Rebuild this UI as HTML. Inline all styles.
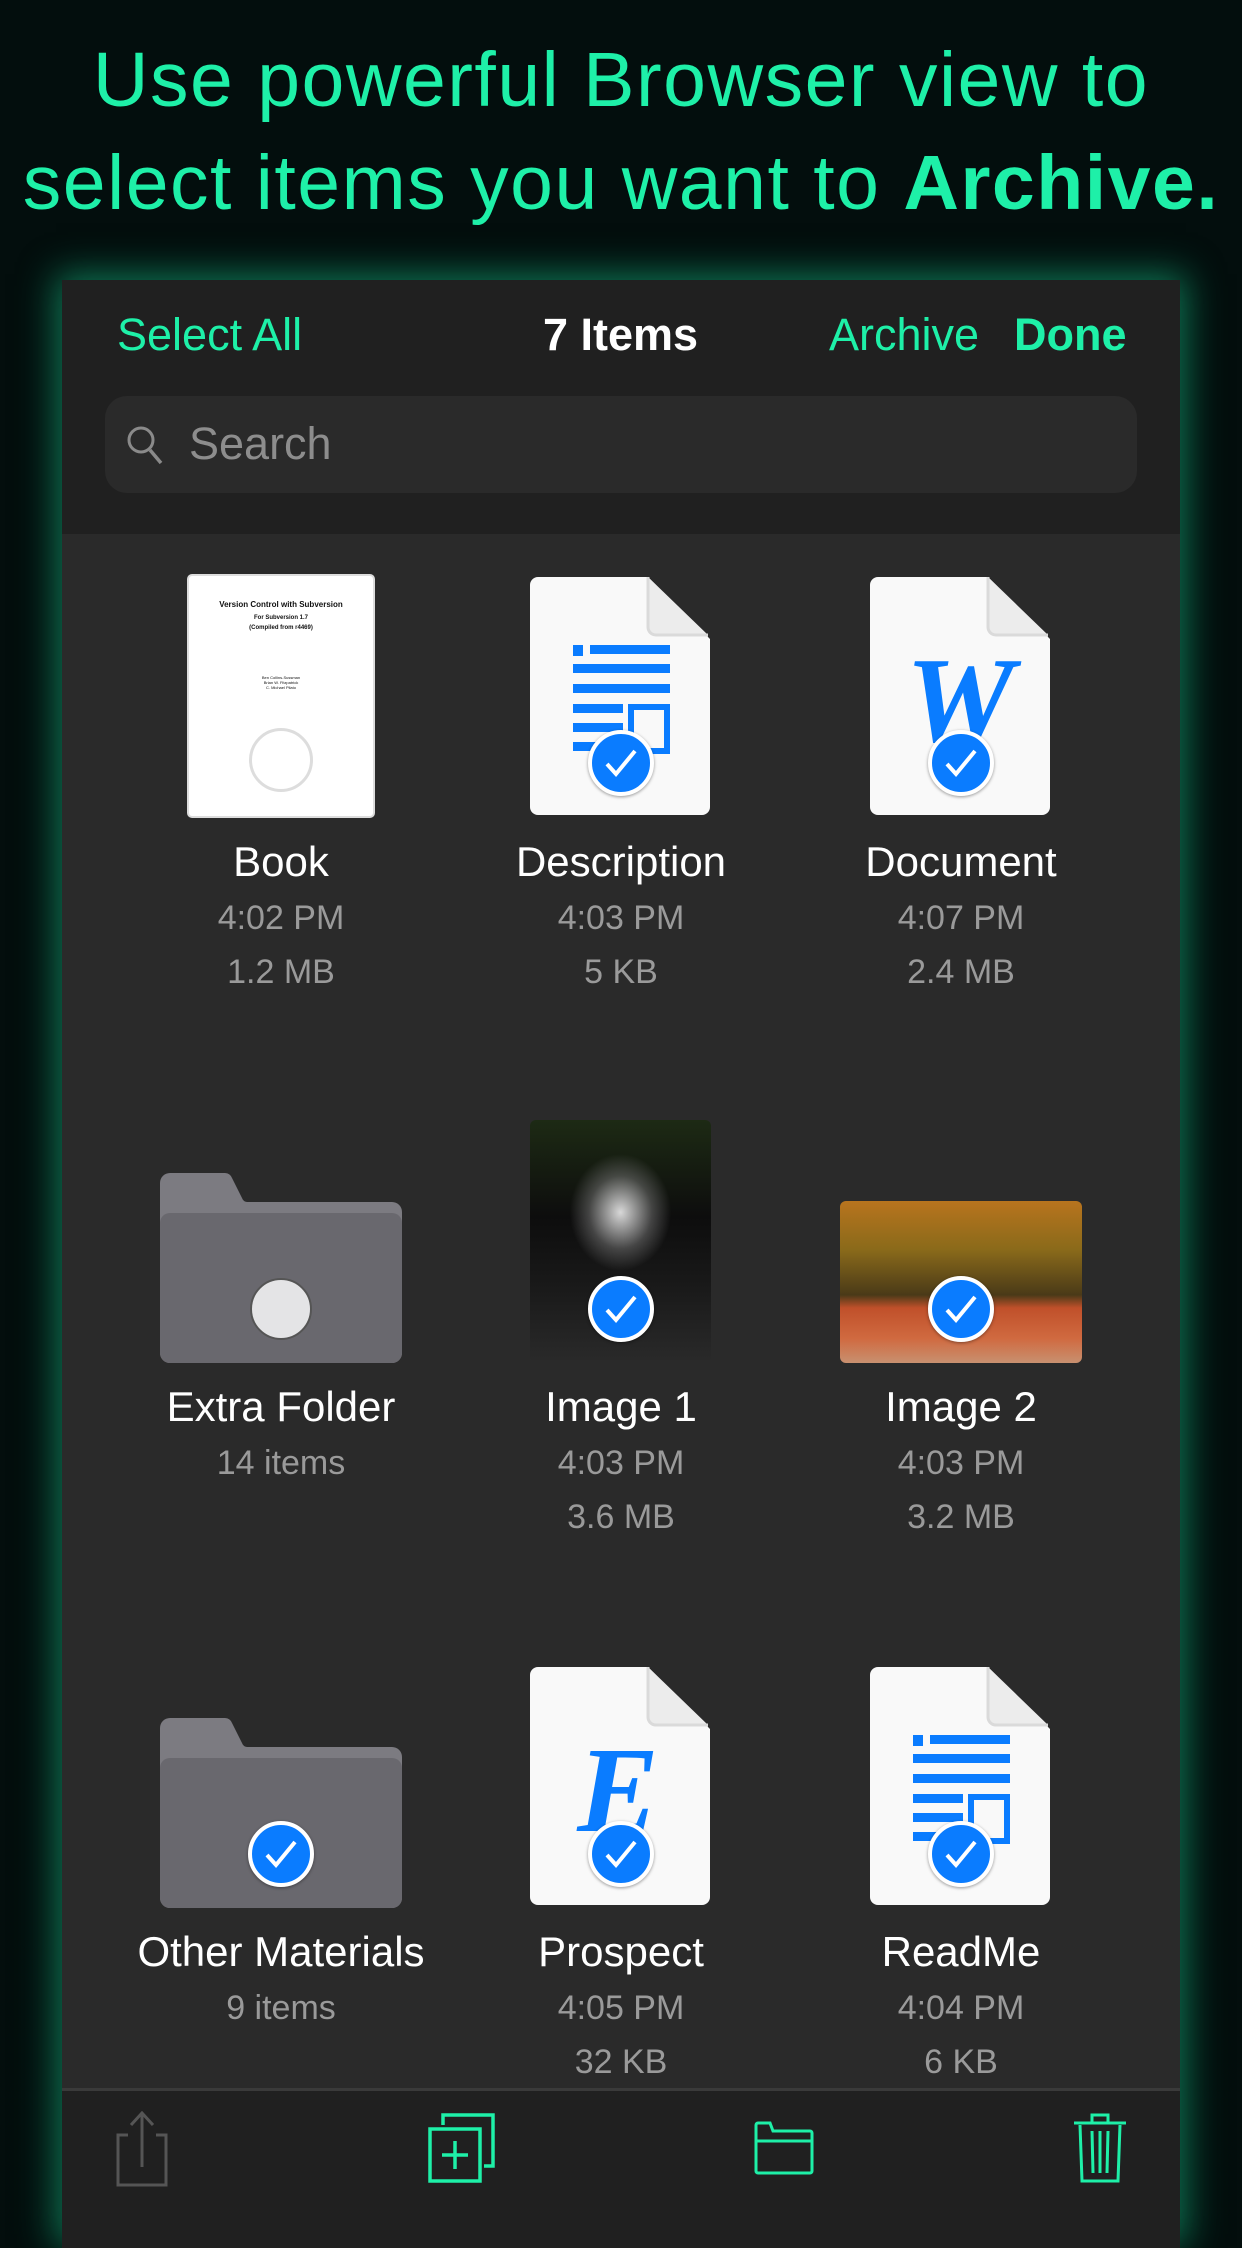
<!DOCTYPE html>
<html><head><meta charset="utf-8"><style>
*{margin:0;padding:0;box-sizing:border-box}
body{width:1242px;height:2208px;background:#030e0d;position:relative;overflow:hidden;font-family:"Liberation Sans",sans-serif}
.t{position:absolute;left:0;width:1242px;text-align:center;color:#1ef0a8;font-size:77px;letter-spacing:1.5px;white-space:nowrap;line-height:88px}
.panel{position:absolute;left:62px;top:280px;width:1118px;height:1960px;background:#2a2a2a;box-shadow:0 0 34px 6px rgba(22,200,140,.55)}
.hdr{position:absolute;left:0;top:0;width:1118px;height:254px;background:#202020}
.a{position:absolute;font-size:45px;white-space:nowrap}
.g{color:#1ef0a8}
.search{position:absolute;left:43px;top:116px;width:1032px;height:97px;background:#2a2a2a;border-radius:22px}
.lbl{position:absolute;width:340px;text-align:center;white-space:nowrap}
.n{color:#fff;font-size:42px;margin-top:-2px}
.s{color:#9a9a9a;font-size:34px;margin-top:-2px}
.ic{position:absolute}
.chk{position:absolute;width:66px;height:66px;border-radius:50%;background:#0a7cff;border:4px solid #fff;box-shadow:0 1px 3px rgba(0,0,0,.4)}
.chk svg{position:absolute;left:12px;top:14px}
.tb{position:absolute;left:0;top:1808px;width:1118px;height:160px;background:#202020;border-top:3px solid #3a3a3a}
</style></head><body>
<div class="t" style="top:36px">Use powerful Browser view to</div>
<div class="t" style="top:139px">select items you want to <b>Archive.</b></div>
<div class="panel">
<div class="hdr">
<div class="a g" style="left:55px;top:29px">Select All</div>
<div class="a" style="left:481px;top:29px;color:#fff;font-weight:bold">7 Items</div>
<div class="a g" style="left:767px;top:29px">Archive</div>
<div class="a g" style="left:952px;top:29px;font-weight:bold">Done</div>
<div class="search">
<svg style="position:absolute;left:20px;top:28px" width="40" height="42" viewBox="0 0 40 42"><circle cx="16" cy="16" r="12" fill="none" stroke="#8a8a8a" stroke-width="3"/><line x1="25" y1="26" x2="36" y2="39" stroke="#8a8a8a" stroke-width="3.5"/></svg>
<div style="position:absolute;left:84px;top:22px;color:#8d8d8d;font-size:45px">Search</div>
</div>
</div>

<!-- Row 1 -->
<div class="ic" style="left:125px;top:294px;width:188px;height:244px;background:#fff;border-radius:5px;border:2px solid #ddd">
<div style="text-align:center;font-size:8px;font-weight:bold;margin-top:24px;color:#111">Version Control with Subversion</div>
<div style="text-align:center;font-size:6px;font-weight:bold;margin-top:6px;color:#111">For Subversion 1.7</div>
<div style="text-align:center;font-size:6px;font-weight:bold;margin-top:4px;color:#111">(Compiled from r4469)</div>
<div style="text-align:center;font-size:4px;margin-top:44px;color:#111;line-height:5px">Ben Collins-Sussman<br>Brian W. Fitzpatrick<br>C. Michael Pilato</div>
<div style="position:absolute;left:60px;top:152px;width:64px;height:64px;border-radius:50%;border:3px solid #ddd"></div>
</div>

<svg class="ic" style="left:468px;top:297px" width="180" height="238" viewBox="0 0 180 238"><path d="M8 0H118L180 62V230a8 8 0 0 1-8 8H8a8 8 0 0 1-8-8V8a8 8 0 0 1 8-8z" fill="#f9f9f9"/><path d="M118 0V50a8 8 0 0 0 8 8H178" fill="#ececec" stroke="#dadada" stroke-width="3"/>
<g fill="#0a7cff"><rect x="43" y="68" width="10" height="11"/><rect x="60" y="68" width="80" height="9"/><rect x="43" y="87" width="97" height="9"/><rect x="43" y="107" width="97" height="9"/><rect x="43" y="127" width="50" height="9"/><rect x="43" y="146" width="50" height="9"/><rect x="43" y="165" width="50" height="9"/><path d="M98 127h42v50h-42zM104 133v38h30v-38z"/></g></svg>

<svg class="ic" style="left:808px;top:297px" width="180" height="238" viewBox="0 0 180 238"><path d="M8 0H118L180 62V230a8 8 0 0 1-8 8H8a8 8 0 0 1-8-8V8a8 8 0 0 1 8-8z" fill="#f9f9f9"/><path d="M118 0V50a8 8 0 0 0 8 8H178" fill="#ececec" stroke="#dadada" stroke-width="3"/>
<text x="90" y="164" text-anchor="middle" font-family="Liberation Serif,serif" font-weight="bold" font-style="italic" font-size="122" fill="#0a7cff">W</text></svg>

<div class="chk" style="left:526px;top:450px"><svg width="34" height="30" viewBox="0 0 34 30"><path d="M3 16L12 26L31 3" fill="none" stroke="#fff" stroke-width="4"/></svg></div>
<div class="chk" style="left:866px;top:450px"><svg width="34" height="30" viewBox="0 0 34 30"><path d="M3 16L12 26L31 3" fill="none" stroke="#fff" stroke-width="4"/></svg></div>

<div class="lbl n" style="left:49px;top:560px">Book</div>
<div class="lbl s" style="left:49px;top:621px">4:02 PM</div>
<div class="lbl s" style="left:49px;top:675px">1.2 MB</div>
<div class="lbl n" style="left:389px;top:560px">Description</div>
<div class="lbl s" style="left:389px;top:621px">4:03 PM</div>
<div class="lbl s" style="left:389px;top:675px">5 KB</div>
<div class="lbl n" style="left:729px;top:560px">Document</div>
<div class="lbl s" style="left:729px;top:621px">4:07 PM</div>
<div class="lbl s" style="left:729px;top:675px">2.4 MB</div>

<!-- Row 2 -->
<svg class="ic" style="left:98px;top:893px" width="242" height="190" viewBox="0 0 242 190"><path d="M10 0H65a8 8 0 0 1 7 5L82 25a6 6 0 0 0 5 4H232a10 10 0 0 1 10 10V180a10 10 0 0 1-10 10H10A10 10 0 0 1 0 180V10A10 10 0 0 1 10 0z" fill="#7c7b81"/><path d="M10 40H232a10 10 0 0 1 10 10V180a10 10 0 0 1-10 10H10A10 10 0 0 1 0 180V50a10 10 0 0 1 10-10z" fill="#69686e"/></svg>
<div style="position:absolute;left:188px;top:998px;width:62px;height:62px;border-radius:50%;background:#e4e4e6;border:2px solid #555"></div>

<div class="ic" style="left:468px;top:840px;width:181px;height:243px;border-radius:6px;background:radial-gradient(ellipse 35% 30% at 50% 38%,#d8d8d8,rgba(120,120,120,.5) 50%,transparent 80%),linear-gradient(180deg,#1d2a14 0%,#0d0d0d 40%,#1a1a1a 70%,#2a2a2a 100%)"></div>
<div class="ic" style="left:778px;top:921px;width:242px;height:162px;border-radius:6px;background:linear-gradient(180deg,#b8741e 0%,#8a6a1a 30%,#4a3a18 58%,#c0502a 66%,#d06a40 85%,#c89070 100%)"></div>
<div class="chk" style="left:526px;top:996px"><svg width="34" height="30" viewBox="0 0 34 30"><path d="M3 16L12 26L31 3" fill="none" stroke="#fff" stroke-width="4"/></svg></div>
<div class="chk" style="left:866px;top:996px"><svg width="34" height="30" viewBox="0 0 34 30"><path d="M3 16L12 26L31 3" fill="none" stroke="#fff" stroke-width="4"/></svg></div>

<div class="lbl n" style="left:49px;top:1105px">Extra Folder</div>
<div class="lbl s" style="left:49px;top:1166px">14 items</div>
<div class="lbl n" style="left:389px;top:1105px">Image 1</div>
<div class="lbl s" style="left:389px;top:1166px">4:03 PM</div>
<div class="lbl s" style="left:389px;top:1220px">3.6 MB</div>
<div class="lbl n" style="left:729px;top:1105px">Image 2</div>
<div class="lbl s" style="left:729px;top:1166px">4:03 PM</div>
<div class="lbl s" style="left:729px;top:1220px">3.2 MB</div>

<!-- Row 3 -->
<svg class="ic" style="left:98px;top:1438px" width="242" height="190" viewBox="0 0 242 190"><path d="M10 0H65a8 8 0 0 1 7 5L82 25a6 6 0 0 0 5 4H232a10 10 0 0 1 10 10V180a10 10 0 0 1-10 10H10A10 10 0 0 1 0 180V10A10 10 0 0 1 10 0z" fill="#7c7b81"/><path d="M10 40H232a10 10 0 0 1 10 10V180a10 10 0 0 1-10 10H10A10 10 0 0 1 0 180V50a10 10 0 0 1 10-10z" fill="#69686e"/></svg>
<svg class="ic" style="left:468px;top:1387px" width="180" height="238" viewBox="0 0 180 238"><path d="M8 0H118L180 62V230a8 8 0 0 1-8 8H8a8 8 0 0 1-8-8V8a8 8 0 0 1 8-8z" fill="#f9f9f9"/><path d="M118 0V50a8 8 0 0 0 8 8H178" fill="#ececec" stroke="#dadada" stroke-width="3"/>
<text x="88" y="164" text-anchor="middle" font-family="Liberation Serif,serif" font-weight="bold" font-style="italic" font-size="122" fill="#0a7cff">E</text></svg>
<svg class="ic" style="left:808px;top:1387px" width="180" height="238" viewBox="0 0 180 238"><path d="M8 0H118L180 62V230a8 8 0 0 1-8 8H8a8 8 0 0 1-8-8V8a8 8 0 0 1 8-8z" fill="#f9f9f9"/><path d="M118 0V50a8 8 0 0 0 8 8H178" fill="#ececec" stroke="#dadada" stroke-width="3"/>
<g fill="#0a7cff"><rect x="43" y="68" width="10" height="11"/><rect x="60" y="68" width="80" height="9"/><rect x="43" y="87" width="97" height="9"/><rect x="43" y="107" width="97" height="9"/><rect x="43" y="127" width="50" height="9"/><rect x="43" y="146" width="50" height="9"/><rect x="43" y="165" width="50" height="9"/><path d="M98 127h42v50h-42zM104 133v38h30v-38z"/></g></svg>
<div class="chk" style="left:186px;top:1541px"><svg width="34" height="30" viewBox="0 0 34 30"><path d="M3 16L12 26L31 3" fill="none" stroke="#fff" stroke-width="4"/></svg></div>
<div class="chk" style="left:526px;top:1541px"><svg width="34" height="30" viewBox="0 0 34 30"><path d="M3 16L12 26L31 3" fill="none" stroke="#fff" stroke-width="4"/></svg></div>
<div class="chk" style="left:866px;top:1541px"><svg width="34" height="30" viewBox="0 0 34 30"><path d="M3 16L12 26L31 3" fill="none" stroke="#fff" stroke-width="4"/></svg></div>

<div class="lbl n" style="left:49px;top:1650px">Other Materials</div>
<div class="lbl s" style="left:49px;top:1711px">9 items</div>
<div class="lbl n" style="left:389px;top:1650px">Prospect</div>
<div class="lbl s" style="left:389px;top:1711px">4:05 PM</div>
<div class="lbl s" style="left:389px;top:1765px">32 KB</div>
<div class="lbl n" style="left:729px;top:1650px">ReadMe</div>
<div class="lbl s" style="left:729px;top:1711px">4:04 PM</div>
<div class="lbl s" style="left:729px;top:1765px">6 KB</div>

<div class="tb">
<svg style="position:absolute;left:52px;top:20px" width="56" height="76" viewBox="0 0 56 76"><path d="M14 24H4V74H52V24H42" fill="none" stroke="#555" stroke-width="3"/><path d="M28 2V56M17 14L28 2L39 14" fill="none" stroke="#555" stroke-width="3"/></svg>
<svg style="position:absolute;left:366px;top:22px" width="68" height="70" viewBox="0 0 68 70"><path d="M15 12V2H65V53H56" fill="none" stroke="#1ef0a8" stroke-width="3.5"/><rect x="2" y="16" width="50" height="52" fill="none" stroke="#1ef0a8" stroke-width="3.5"/><path d="M27 28V56M14 42H40" stroke="#1ef0a8" stroke-width="3.5"/></svg>
<svg style="position:absolute;left:692px;top:30px" width="60" height="54" viewBox="0 0 60 54"><path d="M2 4a2 2 0 0 1 2-2H16L19 10H56a2 2 0 0 1 2 2V50a2 2 0 0 1-2 2H4a2 2 0 0 1-2-2z" fill="none" stroke="#1ef0a8" stroke-width="3"/><path d="M2 20H58" stroke="#1ef0a8" stroke-width="3"/></svg>
<svg style="position:absolute;left:1010px;top:20px" width="56" height="74" viewBox="0 0 56 74"><path d="M2 12H54M20 12V4H36V12M8 14L10 70H46L48 14M20 20L21 62M28 20V62M36 20L35 62" fill="none" stroke="#1ef0a8" stroke-width="3"/></svg>
</div>
</div>
</body></html>
